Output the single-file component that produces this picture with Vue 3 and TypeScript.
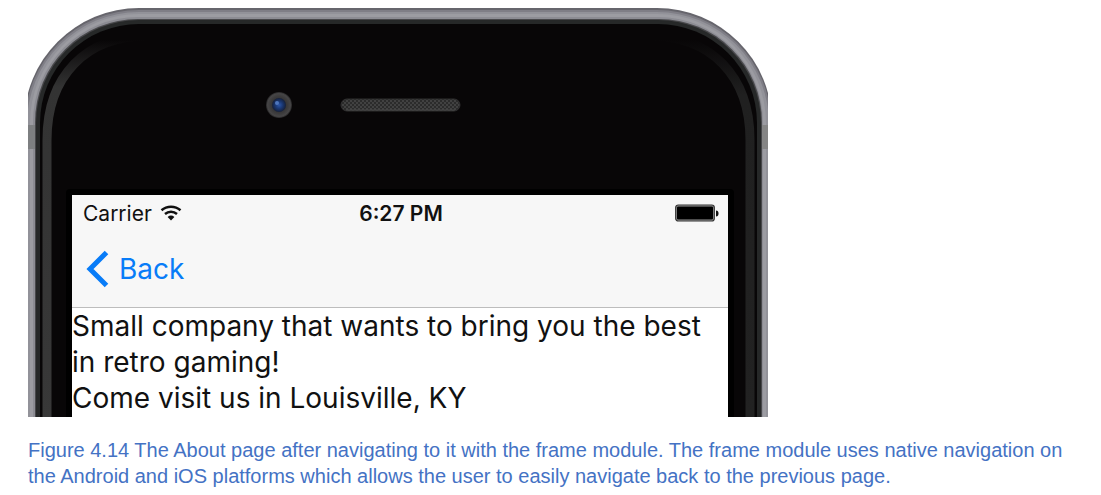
<script setup lang="ts">
const carrier = 'Carrier'
const clock = '6:27 PM'
const lines: string[] = [
  'Small company that wants to bring you the best in retro gaming!',
  'Come visit us in Louisville, KY',
]
const goBack = (): void => window.history.back()
</script>

<template>
  <figure class="figure">
    <div class="phone">
      <svg class="shell" viewBox="0 0 740 409" preserveAspectRatio="none" aria-hidden="true">
        <defs>
          <linearGradient id="bandLeft" x1="0" y1="0" x2="0" y2="1">
            <stop offset="0.01" stop-color="#353535" stop-opacity="0" />
            <stop offset="0.13" stop-color="#333333" />
            <stop offset="1" stop-color="#383838" />
          </linearGradient>
          <linearGradient id="bandRight" x1="0" y1="0" x2="0" y2="1">
            <stop offset="0.01" stop-color="#202020" stop-opacity="0" />
            <stop offset="0.15" stop-color="#202020" />
            <stop offset="1" stop-color="#222222" />
          </linearGradient>
          <radialGradient id="lensRing">
            <stop offset="0" stop-color="#202228" />
            <stop offset="0.65" stop-color="#3b3a3b" />
            <stop offset="0.88" stop-color="#464546" />
            <stop offset="1" stop-color="#262526" />
          </radialGradient>
          <radialGradient id="lens">
            <stop offset="0" stop-color="#2c56a8" />
            <stop offset="0.55" stop-color="#19356f" />
            <stop offset="1" stop-color="#172038" />
          </radialGradient>
          <pattern id="mesh" width="4" height="4" patternUnits="userSpaceOnUse">
            <rect width="4" height="4" fill="#414141" />
            <rect width="2" height="2" fill="#2b2b2b" />
            <rect x="2" y="2" width="2" height="2" fill="#2b2b2b" />
          </pattern>
        </defs>
        <rect x="-4" y="0" width="748" height="560" rx="115" fill="#66656c" />
        <rect x="-3" y="2" width="746" height="560" rx="114" fill="#7f7e86" />
        <rect x="-1" y="4" width="742" height="560" rx="112" fill="#929299" />
        <rect x="2" y="6" width="736" height="560" rx="109" fill="#9c9ca2" />
        <rect x="5" y="9" width="730" height="560" rx="105" fill="#8c8c93" />
        <rect x="0" y="117" width="8" height="24" fill="#7d7f81" />
        <rect x="732" y="117" width="8" height="24" fill="#858585" />
        <rect x="7" y="11" width="727" height="560" rx="103" fill="#48484b" />
        <rect x="8" y="12" width="725" height="560" rx="103" fill="#262828" />
        <rect x="12" y="16" width="717" height="560" rx="99" fill="#080607" />
        <path d="M119 28C58 28 19 68 19 132V420" fill="none" stroke="url(#bandLeft)" stroke-width="9" />
        <path d="M622 28C683 28 722 68 722 132V420" fill="none" stroke="url(#bandRight)" stroke-width="9" />
        <rect x="38" y="181" width="668" height="240" rx="4" fill="#000000" />
        <circle cx="251" cy="97" r="13" fill="url(#lensRing)" />
        <circle cx="251" cy="97" r="7" fill="url(#lens)" />
        <circle cx="249" cy="95" r="2" fill="#4f76bd" />
        <rect x="313" y="91" width="119" height="12" rx="6" fill="url(#mesh)" stroke="#2f2e2f" />
        <path d="M318 102H427" stroke="#484848" stroke-width="1" />
      </svg>

      <main class="screen">
        <header class="bar">
          <div class="status">
            <span class="carrier">
              {{ carrier }}
              <svg class="wifi" viewBox="0 0 22 16" role="img" aria-label="Wi-Fi">
                <path d="M1.5 5.3C7 .5 15 .5 20.5 5.3" fill="none" stroke="#111" stroke-width="2.5" />
                <path d="M5 9C8.5 6 13.5 6 17 9" fill="none" stroke="#111" stroke-width="2.5" />
                <path d="M7.6 12Q11 9.2 14.4 12L11 15.5Z" fill="#111" />
              </svg>
            </span>
            <time class="clock">{{ clock }}</time>
            <svg class="battery" viewBox="0 0 44 18" role="img" aria-label="Battery full">
              <rect x="0.7" y="1" width="38.6" height="16" rx="2.5" fill="#999" stroke="#333" stroke-width="1.2" />
              <rect x="2" y="2.5" width="36" height="13" rx="1" fill="#000" />
              <path d="M41 6.5Q43.5 6.5 43.5 9.5T41 12.5Z" fill="#111" />
            </svg>
          </div>
          <button class="back" type="button" @click="goBack">
            <svg class="chevron" viewBox="0 0 24 38" aria-hidden="true">
              <path d="M20.5 2.5L4 19L20.5 35.5" fill="none" stroke="#087cf8" stroke-width="5" />
            </svg>
            Back
          </button>
        </header>
        <section class="about">
          <p v-for="line in lines" :key="line">{{ line }}</p>
        </section>
      </main>
    </div>
    <figcaption class="caption">
      Figure 4.14 The About page after navigating to it with the frame module. The frame module uses
      native navigation on the Android and iOS platforms which allows the user to easily navigate back
      to the previous page.
    </figcaption>
  </figure>
</template>

<style>
body {
  margin: 0;
  background: #ffffff;
}
</style>

<style scoped>
.figure {
  margin: 0;
  padding: 8px 8px 4px 28px;
}

.phone {
  position: relative;
  box-sizing: border-box;
  max-width: 740px;
  padding: 187px 40px 0 44px;
  overflow: hidden;
}

.shell {
  position: absolute;
  inset: 0;
  width: 100%;
  height: 100%;
}

.screen {
  position: relative;
  background: #ffffff;
  color: #111111;
  font-family: Inter, "Liberation Sans", sans-serif;
}

.bar {
  padding-bottom: 18px;
  border-bottom: 1px solid #bdbdbd;
  background: #f7f7f7;
}

.status {
  display: grid;
  grid-template-columns: 1fr auto 1fr;
  align-items: center;
  height: 36px;
  padding: 0 9px 0 11px;
  font-size: 21px;
}

.carrier {
  display: flex;
  align-items: center;
  gap: 8px;
}

.wifi {
  width: 22px;
  height: 16px;
}

.clock {
  font-weight: 600;
}

.battery {
  justify-self: end;
  width: 44px;
  height: 18px;
}

.back {
  display: flex;
  align-items: center;
  gap: 9px;
  height: 40px;
  margin: 18px 0 0 14px;
  padding: 0;
  border: 0;
  background: none;
  color: #087cf8;
  font: inherit;
  font-size: 28px;
  cursor: pointer;
}

.chevron {
  width: 24px;
  height: 38px;
}

.about {
  font-size: 28px;
  line-height: 36px;
  padding-bottom: 1px;
}

.about p {
  margin: 0;
}

.caption {
  margin-top: 20px;
  color: #4472c4;
  font-family: "Liberation Sans", Arial, sans-serif;
  font-size: 20px;
  line-height: 26px;
}
</style>
